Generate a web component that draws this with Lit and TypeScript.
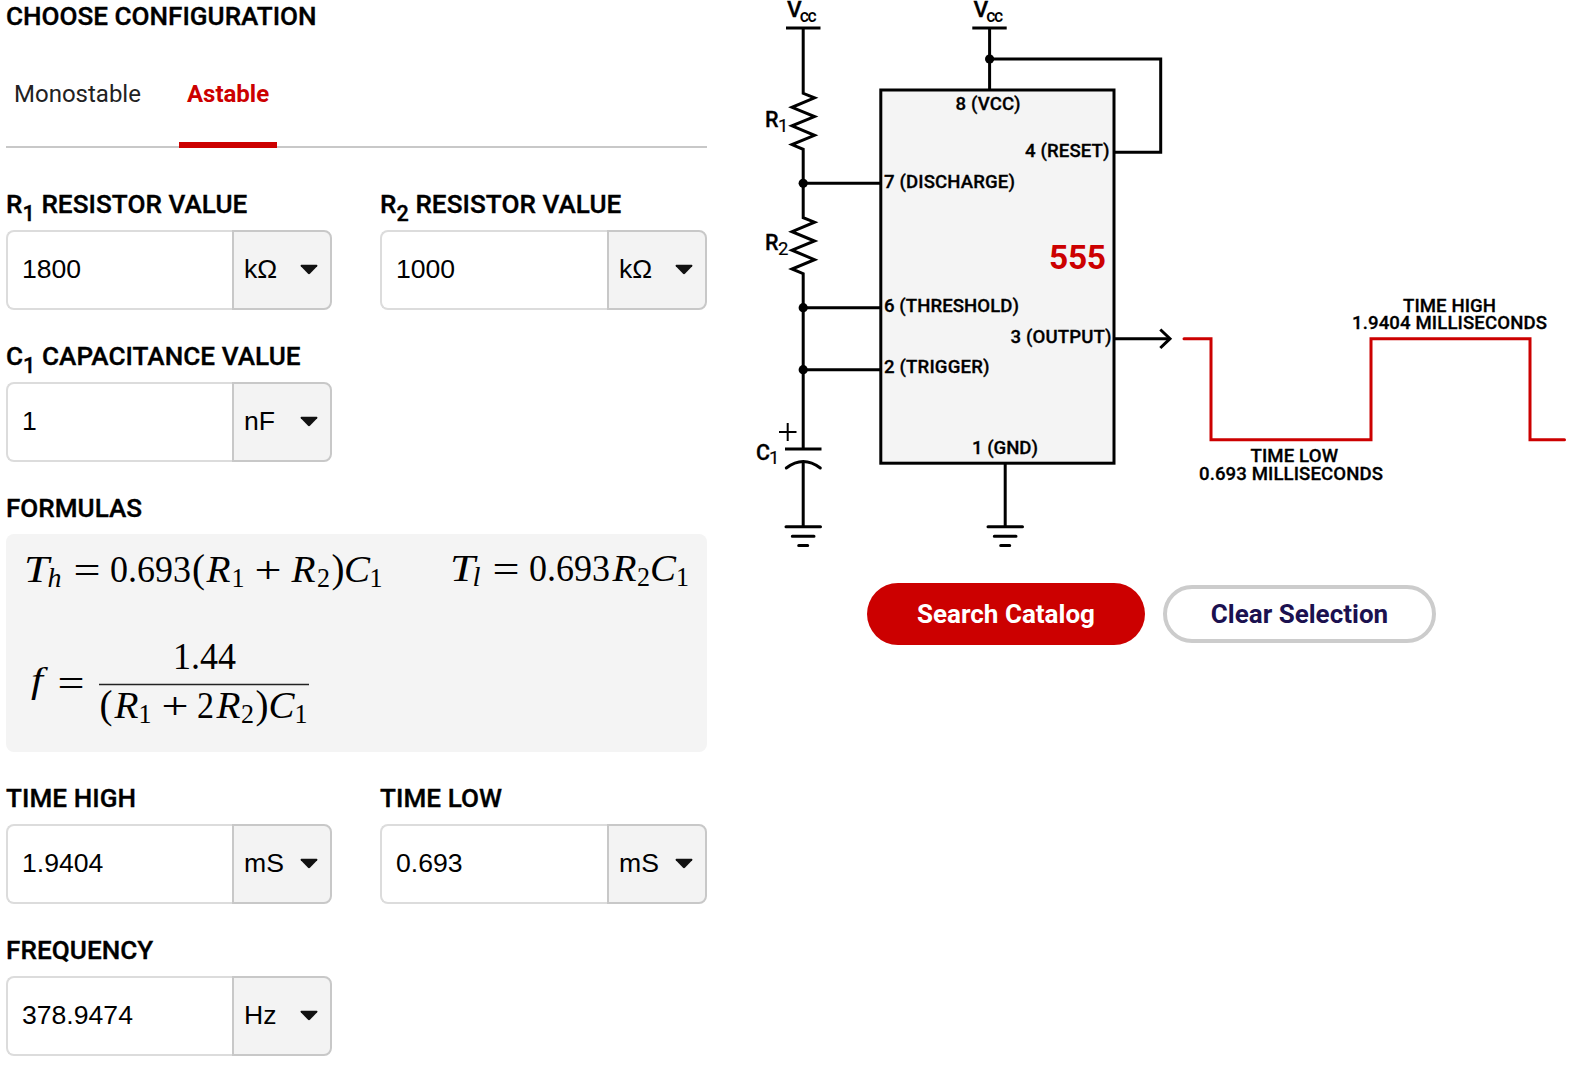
import { LitElement, html, svg, css, nothing } from "lit";
import { customElement, property, state } from "lit/decorators.js";

/** Numeric field with an attached unit selector. */
@customElement("unit-field")
class UnitField extends LitElement {
  @property() letter = "";
  @property() index = "";
  @property() label = "";
  @property() value = "";
  @property() unit = "";

  static styles = css`
    :host { display: block; }
    .label {
      height: 72px; box-sizing: border-box; padding-bottom: 10px;
      display: flex; align-items: flex-end; -webkit-text-stroke: .35px #000; letter-spacing: .06px;
      font: 500 26.1px/32px Roboto, sans-serif; color: #000; white-space: pre;
    }
    sub { font-size: 21.6px; line-height: 0; vertical-align: -8px; }
    .box { display: flex; height: 80px; box-sizing: border-box; }
    .value {
      flex: 1; min-width: 0; box-sizing: border-box; border: 2px solid #dcdcdc; border-right: 0;
      border-radius: 8px 0 0 8px; padding: 0 0 2px 14px; background: #fff;
      font: 26.6px/30px "Liberation Sans", Arial, sans-serif; color: #000; outline: none;
    }
    .unit {
      width: 100px; box-sizing: border-box; border: 2px solid #c8c8c8; border-radius: 0 8px 8px 0;
      background: #f3f3f3; padding: 0 12px 1px 10px;
      display: flex; align-items: center; justify-content: space-between;
      font: 26.6px/30px "Liberation Sans", Arial, sans-serif; color: #000;
    }
    .unit span { padding-bottom: 2px; }
    .caret { display: block; width: 18px; height: 11px; }
  `;

  render() {
    return html`
      <div class="label"><span>${this.letter}${this.index ? html`<sub>${this.index}</sub> ` : nothing}${this.label}</span></div>
      <div class="box">
        <input class="value" .value=${this.value} />
        <div class="unit">
          <span>${this.unit}</span>
          <svg class="caret" viewBox="0 0 18 11"><path d="M1.3 .8H16.7Q18 1 17.2 2.2L10.2 9.6Q9 10.8 7.8 9.6L.8 2.2Q0 1 1.3 .8Z" fill="#111" /></svg>
        </div>
      </div>`;
  }
}

type Glyph = [text: string, x: number, y: number, size: number, width: number, italic?: boolean];

const FORMULAS: Glyph[] = [
  ["T", 24, 582, 38, 25, true], ["h", 47.5, 587, 27, 14, true], ["=", 73.5, 582.5, 38, 27],
  ["0.693", 110, 582, 37, 81], ["(", 192, 582, 39, 13], ["R", 206.5, 582, 38, 24, true],
  ["1", 231.5, 587, 27, 13], ["+", 254.5, 582.5, 38, 27], ["R", 291.5, 582, 38, 24, true],
  ["2", 317, 587, 27, 13], [")", 331.5, 582, 39, 13], ["C", 344, 582, 38, 26, true],
  ["1", 369.5, 587, 27, 13],
  ["T", 450, 580.5, 38, 25, true], ["l", 472.5, 585.5, 27, 8, true], ["=", 492.5, 581.5, 38, 27],
  ["0.693", 529, 580.5, 37, 81], ["R", 612.5, 580.5, 38, 24, true], ["2", 637, 585.5, 27, 13],
  ["C", 650, 580.5, 38, 26, true], ["1", 676, 585.5, 27, 13],
  ["f", 31, 692, 35, 12, true], ["=", 57.5, 695.5, 38, 27], ["1.44", 173, 669, 37, 63],
  ["(", 99.5, 718, 39, 13], ["R", 114.5, 718, 38, 24, true], ["1", 138.5, 723, 27, 13],
  ["+", 161.5, 719, 38, 27], ["2", 197, 718, 37, 17], ["R", 216.5, 718, 38, 24, true],
  ["2", 241, 723, 27, 13], [")", 255.5, 718, 39, 13], ["C", 268.5, 718, 38, 26, true],
  ["1", 294.5, 723, 27, 13],
];

type Pin = [text: string, x: number, y: number, width: number];

const LABELS: Pin[] = [
  ["8 (VCC)", 955.5, 110, 65], ["4 (RESET)", 1025, 157, 84.5], ["7 (DISCHARGE)", 884, 188, 131],
  ["6 (THRESHOLD)", 884, 312, 135], ["3 (OUTPUT)", 1010.5, 343, 101], ["2 (TRIGGER)", 884, 373, 105.5],
  ["1 (GND)", 972, 454, 66], ["TIME HIGH", 1403, 312, 93], ["1.9404 MILLISECONDS", 1352, 329, 195],
  ["TIME LOW", 1250.5, 461.7, 87.5], ["0.693 MILLISECONDS", 1199, 480, 184],
];

const resistor = (y: number) =>
  `V${y}L814.5 ${y + 4.5}L792 ${y + 14}L814.5 ${y + 23.3}L792 ${y + 32.5}L814.5 ${y + 42}L792 ${y + 51.3}L803.2 ${y + 56}`;

@customElement("app-root")
class AppRoot extends LitElement {
  @state() private mode = "Astable";

  static styles = css`
    :host {
      display: grid; grid-template-columns: 701px 831px; column-gap: 33px;
      padding-left: 6px; width: 1571px; height: 1065px; box-sizing: border-box;
      overflow: hidden; background: #fff; font-family: Roboto, sans-serif; color: #000;
    }
    .heading { font: 500 26.1px/32px Roboto, sans-serif; -webkit-text-stroke: .35px #000; color: #000; margin: 0; }
    .tabs {
      display: flex; height: 116px; margin-bottom: 10px; gap: 30px;
      box-sizing: border-box; border-bottom: 2px solid #c8c8c8;
    }
    .tab {
      display: flex; align-items: flex-start; padding: 46px 8px 0; height: 116px; box-sizing: border-box;
      border: 0; background: none;
      font: 400 24px/32px Roboto, sans-serif; color: #222; white-space: nowrap;
    }
    .active { font-weight: 700; color: #c00; border-bottom: 6px solid #c00; }
    .fields { display: grid; grid-template-columns: 326px 327px; column-gap: 48px; }
    .caption { height: 72px; box-sizing: border-box; padding-bottom: 10px; display: flex; align-items: flex-end; }
    .formulas { display: block; width: 701px; height: 218px; border-radius: 8px; background: #f4f4f4; }
    .math { font-family: "Liberation Serif", serif; fill: #000; }
    .italic { font-style: italic; }
    .diagram { display: block; width: 831px; height: 560px; }
    .wire { fill: none; stroke: #000; stroke-width: 3; stroke-linecap: butt; }
    .round { stroke-linecap: round; }
    .thin { stroke-width: 2; }
    .chip { fill: #f4f4f4; stroke: #000; stroke-width: 3; }
    .wave { fill: none; stroke: #c00; stroke-width: 3; stroke-linecap: round; }
    .pin { font: 500 18.6px Roboto, sans-serif; stroke: #000; stroke-width: .3px; }
    .part { font: 500 22.8px Roboto, sans-serif; stroke: #000; stroke-width: .3px; }
    .small { font: 500 17.5px Roboto, sans-serif; }
    .index { font: 400 18.5px Roboto, sans-serif; stroke: #000; stroke-width: .2px; }
    .name { font: 700 33.5px Roboto, sans-serif; fill: #c00; }
    .actions { display: flex; align-items: center; gap: 18px; padding: 23px 0 0 127px; }
    .button {
      box-sizing: border-box; padding: 0; text-align: center; white-space: nowrap;
      font: 700 26px/30px Roboto, sans-serif;
    }
    .search { width: 278px; height: 62px; border: 0; border-radius: 31px; background: #c00; color: #fff; }
    .clear { width: 273px; height: 58px; border: 4px solid #ccc; border-radius: 29px; background: #fff; color: #1b1150; }
  `;

  private tab(name: string) {
    return html`<button class="tab ${this.mode === name ? "active" : ""}" @click=${() => (this.mode = name)}>${name}</button>`;
  }

  private formulas() {
    return html`<svg class="formulas" viewBox="6 534 701 218">
      ${FORMULAS.map(([t, x, y, s, w, i]) => svg`<text class="math ${i ? "italic" : ""}" x=${x} y=${y}
        font-size=${s} textLength=${w} lengthAdjust="spacingAndGlyphs">${t}</text>`)}
      <path d="M99 684.5H309" stroke="#222" stroke-width="1.3" />
    </svg>`;
  }

  private diagram() {
    return html`<svg class="diagram" viewBox="740 0 831 560">
      <rect class="chip" x="880.8" y="90" width="233.2" height="373.2" />
      <path class="wire" d="M786 28H820.5M803.2 28${resistor(93.3)}${resistor(217.7)}V449M785 449H821.5M803.2 462V526.7" />
      <path class="wire round" d="M786.3 468Q803.2 455 820.3 468" />
      <path class="wire thin" d="M779 432H796.5M787.7 423V441" />
      <path class="wire round" d="M786 526.7H820.5M792.3 536.2H814M798.7 545.5H807.7" />
      <path class="wire" d="M803 183.3H881M803 307.7H881M803 369.7H881" />
      <path class="wire" d="M972.3 28H1006.7M989.6 28V90M989.6 59H1160.7V152.2H1114M1114 338.7H1170M1005.2 463V526.7" />
      <path class="wire" d="M1160.3 329.5L1170 338.7L1160.3 348" />
      <path class="wire round" d="M988 526.7H1022.5M994.3 536.2H1016M1000.7 545.5H1009.7" />
      <circle cx="803.2" cy="183.3" r="4.6" /><circle cx="803.2" cy="307.7" r="4.6" />
      <circle cx="803.2" cy="369.7" r="4.6" /><circle cx="989.6" cy="59" r="4.6" />
      <path class="wave" d="M1184 338.7H1211V439.7H1371V338.7H1530V439.7H1564.5" />
      ${LABELS.map(([t, x, y, w]) => svg`<text class="pin" x=${x} y=${y} textLength=${w}>${t}</text>`)}
      <text class="name" x="1049" y="268.7" textLength="57">555</text>
      <text class="part" x="787" y="16.5">V</text><text class="small" x="799.7" y="21.8" textLength="17">cc</text>
      <text class="part" x="973.5" y="16.5">V</text><text class="small" x="986.2" y="21.8" textLength="17">cc</text>
      <text class="part" x="765" y="127" textLength="13.6" lengthAdjust="spacingAndGlyphs">R</text><text class="index" x="778" y="131.7">1</text>
      <text class="part" x="765" y="249.7" textLength="13.6" lengthAdjust="spacingAndGlyphs">R</text><text class="index" x="778" y="254.7">2</text>
      <text class="part" x="756" y="460" textLength="14" lengthAdjust="spacingAndGlyphs">C</text><text class="index" x="769" y="464.3">1</text>
    </svg>`;
  }

  render() {
    return html`
      <section>
        <h2 class="heading">CHOOSE CONFIGURATION</h2>
        <nav class="tabs">${this.tab("Monostable")}${this.tab("Astable")}</nav>
        <div class="fields">
          <unit-field letter="R" index="1" label="RESISTOR VALUE" value="1800" unit="kΩ"></unit-field>
          <unit-field letter="R" index="2" label="RESISTOR VALUE" value="1000" unit="kΩ"></unit-field>
          <unit-field letter="C" index="1" label="CAPACITANCE VALUE" value="1" unit="nF"></unit-field>
        </div>
        <div class="caption heading">FORMULAS</div>
        ${this.formulas()}
        <div class="fields">
          <unit-field label="TIME HIGH" value="1.9404" unit="mS"></unit-field>
          <unit-field label="TIME LOW" value="0.693" unit="mS"></unit-field>
          <unit-field label="FREQUENCY" value="378.9474" unit="Hz"></unit-field>
        </div>
      </section>
      <section>
        ${this.diagram()}
        <div class="actions">
          <button class="button search">Search Catalog</button>
          <button class="button clear">Clear Selection</button>
        </div>
      </section>`;
  }
}
